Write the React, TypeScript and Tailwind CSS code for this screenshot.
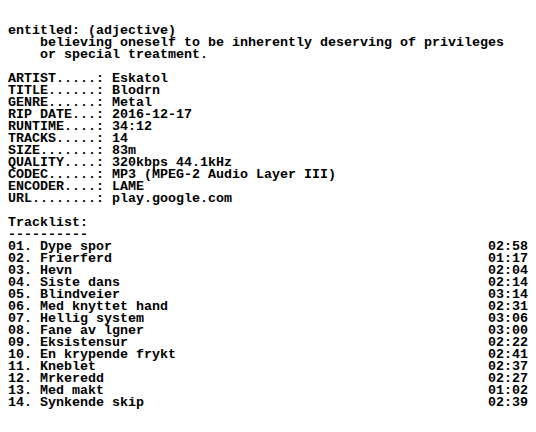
import React from 'react';

const header = [
  'entitled: (adjective)',
  '    believing oneself to be inherently deserving of privileges',
  '    or special treatment.',
  '',
  'ARTIST.....: Eskatol',
  'TITLE......: Blodrn',
  'GENRE......: Metal',
  'RIP DATE...: 2016-12-17',
  'RUNTIME....: 34:12',
  'TRACKS.....: 14',
  'SIZE.......: 83m',
  'QUALITY....: 320kbps 44.1kHz',
  'CODEC......: MP3 (MPEG-2 Audio Layer III)',
  'ENCODER....: LAME',
  'URL........: play.google.com',
  '',
  'Tracklist:',
  '----------',
];

const tracks: [string, string][] = [
  ['Dype spor', '02:58'],
  ['Frierferd', '01:17'],
  ['Hevn', '02:04'],
  ['Siste dans', '02:14'],
  ['Blindveier', '03:14'],
  ['Med knyttet hand', '02:31'],
  ['Hellig system', '03:06'],
  ['Fane av lgner', '03:00'],
  ['Eksistensur', '02:22'],
  ['En krypende frykt', '02:41'],
  ['Kneblet', '02:37'],
  ['Mrkeredd', '02:27'],
  ['Med makt', '01:02'],
  ['Synkende skip', '02:39'],
];

export default function App() {
  const lines = [
    ...header,
    ...tracks.map(([name, time], i) =>
      `${String(i + 1).padStart(2, '0')}. ${name}`.padEnd(60, ' ') + time
    ),
  ];

  return (
    <div className="min-h-[432px] w-[536px] bg-white pl-2 pt-[25px] text-black">
      <pre className="m-0 font-['Liberation_Mono',monospace] text-[13.333px] font-bold leading-[12px] whitespace-pre">
        {lines.join('\n')}
      </pre>
    </div>
  );
}
